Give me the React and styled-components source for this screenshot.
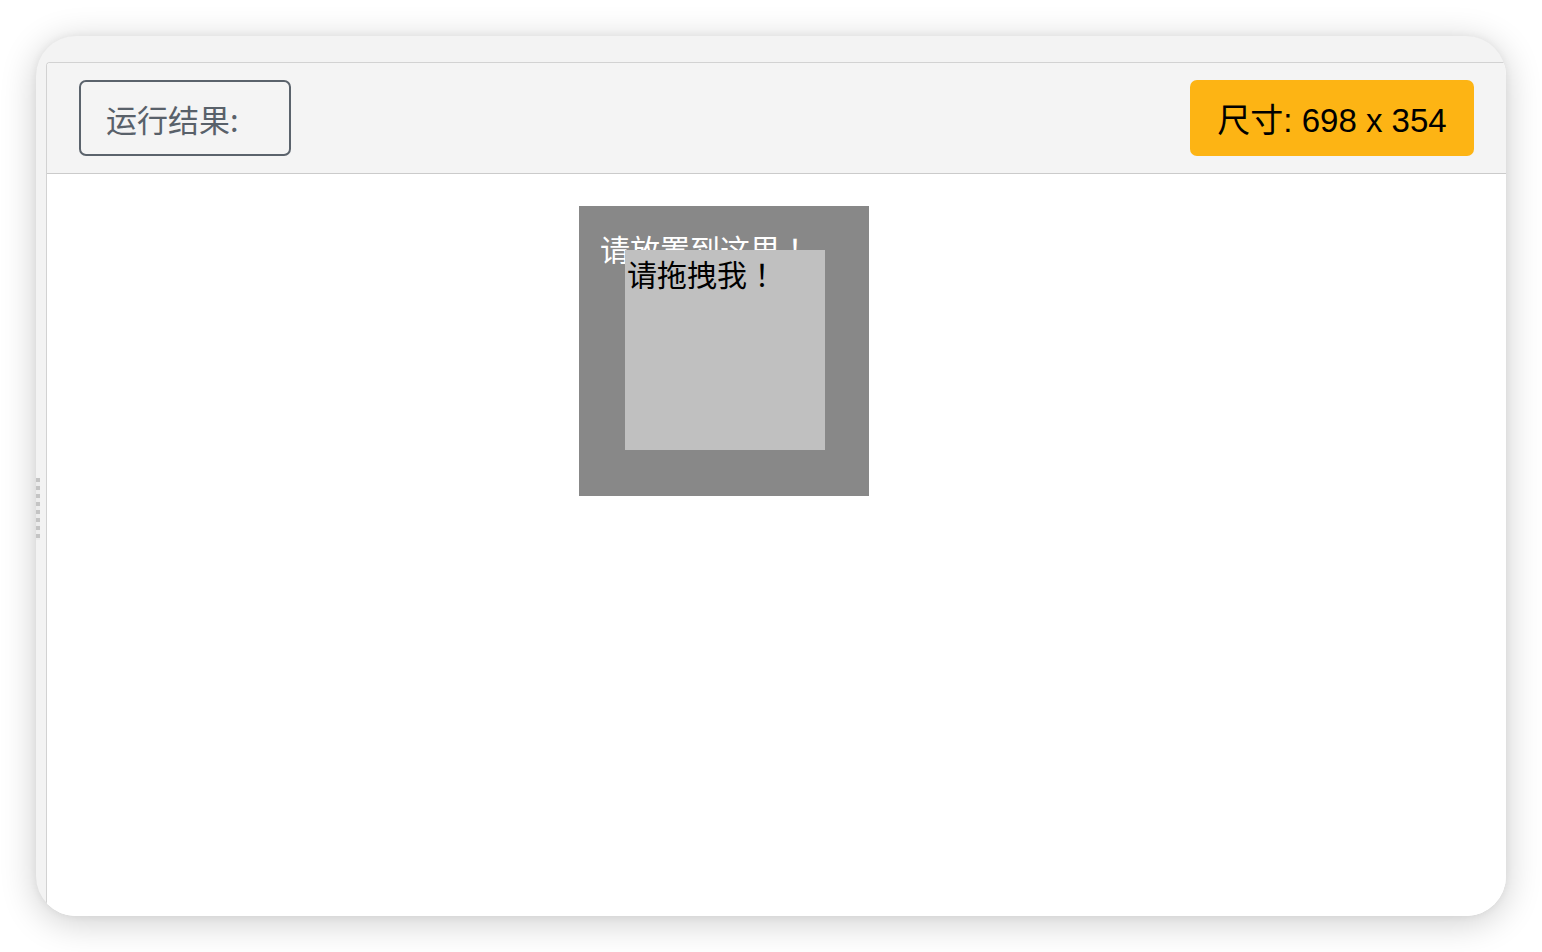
import React from "react";
import styled, { createGlobalStyle } from "styled-components";

const GlobalStyle = createGlobalStyle`
  html, body { margin: 0; padding: 0; background: #ffffff; }
  body { font-family: "Liberation Sans", "Noto Sans CJK SC", sans-serif; }
  * { box-sizing: border-box; }
`;

const Page = styled.div`
  width: 1542px;
  height: 952px;
  padding: 36px;
`;

const Frame = styled.div`
  position: relative;
  width: 1470px;
  height: 880px;
  border-radius: 40px;
  background: #f3f3f3;
  box-shadow: 0 6px 36px rgba(0, 0, 0, 0.2), 0 0 8px rgba(0, 0, 0, 0.06);
  overflow: hidden;
  padding: 26px 0 0 10px;
  display: flex;
`;

const Grip = styled.div`
  position: absolute;
  left: 0;
  top: 442px;
  width: 4px;
  height: 62px;
  background: repeating-linear-gradient(
    to bottom,
    #c4c4c4 0px,
    #c4c4c4 4px,
    #ececec 4px,
    #ececec 8px
  );
`;

const Panel = styled.div`
  flex: 1;
  display: flex;
  flex-direction: column;
  border-top: 1px solid #d2d2d2;
  border-left: 1px solid #d2d2d2;
  border-top-left-radius: 4px;
  background: #ffffff;
  overflow: hidden;
`;

const Header = styled.div`
  height: 111px;
  flex: none;
  display: flex;
  align-items: center;
  justify-content: space-between;
  padding: 0 32px;
  background: #f4f4f4;
  border-bottom: 1px solid #cbcbcb;
`;

const ResultLabel = styled.div`
  width: 212px;
  height: 76px;
  display: flex;
  align-items: center;
  padding-left: 25px;
  border: 2px solid #5b636c;
  border-radius: 7px;
  color: #59616a;
  font-family: "Noto Sans CJK SC", sans-serif;
  font-size: 31px;
`;

const SizeBadge = styled.div`
  width: 284px;
  height: 76px;
  display: flex;
  align-items: center;
  justify-content: center;
  background: #fdb414;
  border-radius: 7px;
  color: #000000;
  font-family: "Liberation Sans", "Noto Sans CJK SC", sans-serif;
  font-size: 33px;
`;

const Content = styled.div`
  flex: 1;
  background: #ffffff;
  padding: 32px 0 0 532px;
`;

const DropZone = styled.div`
  position: relative;
  width: 290px;
  height: 290px;
  background: #888888;
  padding: 22px 21px;
  color: #ffffff;
  font-family: "Noto Sans CJK SC", serif;
  font-size: 30px;
  line-height: 40px;
`;

const DragBox = styled.div`
  position: absolute;
  left: 46px;
  top: 44px;
  width: 200px;
  height: 200px;
  background: #c0c0c0;
  color: #000000;
  padding-left: 2px;
  font-family: "Noto Sans CJK SC", serif;
  font-size: 30px;
  line-height: 46px;
`;

const Bang = styled.span`
  font-family: "Noto Sans CJK TC", "Noto Sans CJK SC", serif;
`;

export default function App() {
  return (
    <>
      <GlobalStyle />
      <Page>
        <Frame>
          <Grip />
          <Panel>
            <Header>
              <ResultLabel>运行结果:</ResultLabel>
              <SizeBadge>尺寸: 698 x 354</SizeBadge>
            </Header>
            <Content>
              <DropZone>
                请放置到这里<Bang>！</Bang>
                <DragBox>
                  请拖拽我<Bang>！</Bang>
                </DragBox>
              </DropZone>
            </Content>
          </Panel>
        </Frame>
      </Page>
    </>
  );
}
